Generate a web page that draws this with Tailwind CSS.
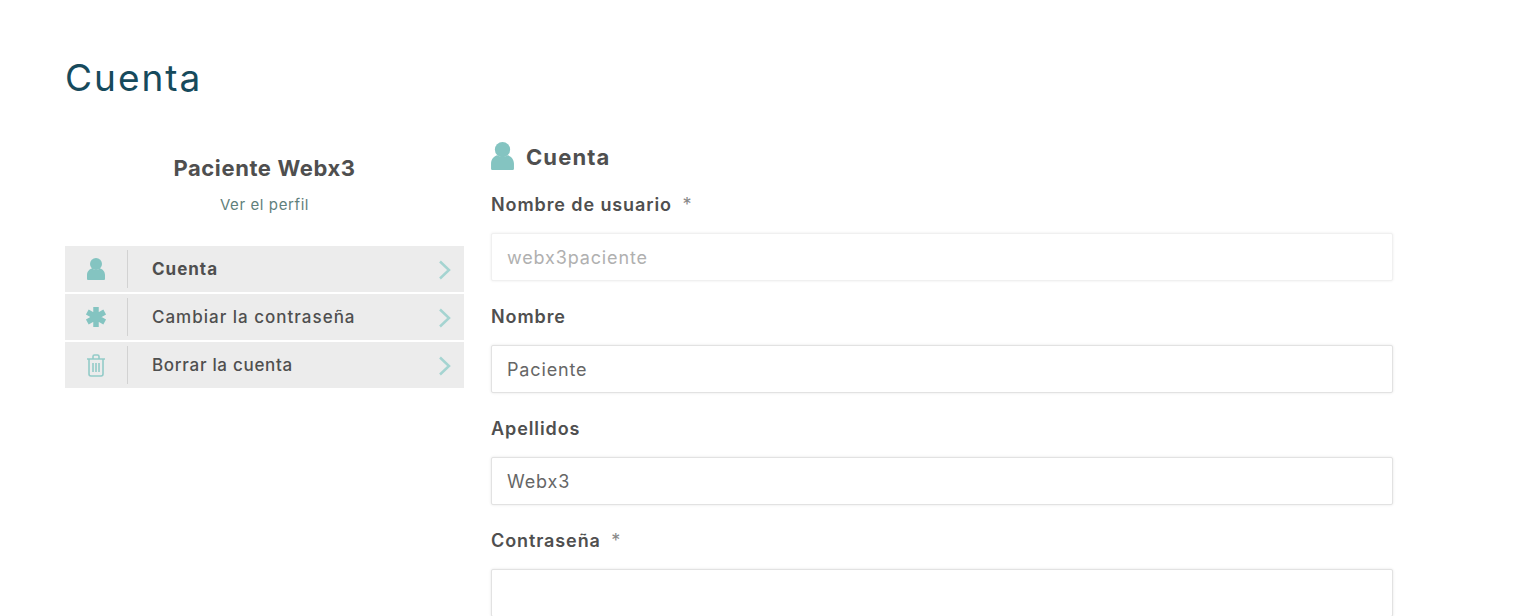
<!DOCTYPE html>
<html lang="en">
<head>
  <meta charset="UTF-8" />
  <title>Cuenta</title>
  <script src="https://cdn.jsdelivr.net/npm/@tailwindcss/browser@4"></script>
</head>
<body class="bg-white font-['Inter',sans-serif] text-[#4f4f4f] h-[616px] overflow-hidden">
  <div class="pl-[65px] pt-[56px]">
    <h1 class="text-[37px] leading-[44px] text-[#164a5c] tracking-[2px]">Cuenta</h1>

    <div class="flex gap-[27px] mt-[36px]">
      <!-- Sidebar -->
      <aside class="w-[399px] shrink-0">
        <div class="pt-[16px] text-center">
          <p class="text-[22px] leading-[32px] font-bold tracking-[0.6px]">Paciente Webx3</p>
          <a class="block mt-[10px] text-[15px] leading-[22px] text-[#5f7f7c] tracking-[0.6px]">Ver el perfil</a>
        </div>
        <ul class="mt-[30px] flex flex-col gap-[2px]">
          <li class="h-[46px] bg-[#ececec] flex items-center">
            <span class="w-[62px] flex justify-center">
              <svg class="w-[18px] h-[22px]" viewBox="0 0 18 22" fill="#84c4c1"><circle cx="9" cy="6" r="6"/><path d="M1 22a1 1 0 0 1-1-1v-4c0-3.500 2.500-6 5-6.500 1.200.8 2.600 1.200 4 1.200s2.800-.4 4-1.200c2.500.5 5 3 5 6.500v4a1 1 0 0 1-1 1z"/></svg>
            </span>
            <span class="w-px h-[38px] bg-[#d2d2d2]"></span>
            <span class="ml-[24px] pt-[2px] flex-1 text-[17px] font-bold tracking-[1px]">Cuenta</span>
            <svg class="w-[14px] h-[20px] mr-[12px] mt-[2px]" viewBox="0 0 14 20" fill="none" stroke="#a5d4d1" stroke-width="2.500"><path d="M2 1.500 11 10 2 18.500"/></svg>
          </li>
          <li class="h-[46px] bg-[#ececec] flex items-center">
            <span class="w-[62px] flex justify-center">
              <svg class="w-[22px] h-[22px]" viewBox="0 0 22 22" fill="none" stroke="#84c4c1" stroke-width="5.500"><path d="M11 1v20M2.300 6l17.400 10M19.700 6 2.300 16"/></svg>
            </span>
            <span class="w-px h-[38px] bg-[#d2d2d2]"></span>
            <span class="ml-[24px] pt-[2px] flex-1 text-[17px] font-medium tracking-[1px]">Cambiar la contraseña</span>
            <svg class="w-[14px] h-[20px] mr-[12px] mt-[2px]" viewBox="0 0 14 20" fill="none" stroke="#a5d4d1" stroke-width="2.500"><path d="M2 1.500 11 10 2 18.500"/></svg>
          </li>
          <li class="h-[46px] bg-[#ececec] flex items-center">
            <span class="w-[62px] flex justify-center">
              <svg class="w-[20px] h-[23px]" viewBox="0 0 20 23" fill="none" stroke="#93cbc8" stroke-width="1.600"><path d="M1 5h18M7 5V2.500C7 1.500 7.500 1 8.500 1h3c1 0 1.500.5 1.500 1.500V5M3 5v15c0 1.200.8 2 2 2h10c1.200 0 2-.8 2-2V5M7 9v9M10 9v9M13 9v9"/></svg>
            </span>
            <span class="w-px h-[38px] bg-[#d2d2d2]"></span>
            <span class="ml-[24px] pt-[2px] flex-1 text-[17px] font-medium tracking-[0.7px]">Borrar la cuenta</span>
            <svg class="w-[14px] h-[20px] mr-[12px] mt-[2px]" viewBox="0 0 14 20" fill="none" stroke="#a5d4d1" stroke-width="2.500"><path d="M2 1.500 11 10 2 18.500"/></svg>
          </li>
        </ul>
      </aside>

      <!-- Form -->
      <main class="w-[902px] pt-[6px]">
        <div class="flex items-center gap-[12px] h-[30px]">
          <svg class="w-[23px] h-[28px] mb-[2px]" viewBox="0 0 18 22" fill="#84c4c1"><circle cx="9" cy="6" r="6"/><path d="M1 22a1 1 0 0 1-1-1v-4c0-3.500 2.500-6 5-6.500 1.200.8 2.600 1.200 4 1.200s2.800-.4 4-1.200c2.500.5 5 3 5 6.500v4a1 1 0 0 1-1 1z"/></svg>
          <h2 class="text-[22px] leading-[30px] font-bold tracking-[1.1px]">Cuenta</h2>
        </div>

        <div class="mt-[21px] flex flex-col gap-[24px]">
          <div>
            <label class="block text-[18px] leading-[24px] font-semibold tracking-[0.9px]">Nombre de usuario <span class="ml-[5px] font-normal text-[#888]">*</span></label>
            <input disabled value="webx3paciente" class="mt-[16px] block w-full h-[48px] px-[15px] text-[18px] tracking-[0.85px] text-[#b0b0b0] bg-white border border-[#f0f0f0] rounded-[2px] shadow-[0_0_3px_rgba(0,0,0,0.08)]" />
          </div>
          <div>
            <label class="block text-[18px] leading-[24px] font-semibold tracking-[0.9px]">Nombre</label>
            <input value="Paciente" class="mt-[16px] block w-full h-[48px] px-[15px] text-[18px] tracking-[0.85px] text-[#666] bg-white border border-[#e2e2e2] rounded-[2px] shadow-[0_0_3px_rgba(0,0,0,0.1)]" />
          </div>
          <div>
            <label class="block text-[18px] leading-[24px] font-semibold tracking-[0.9px]">Apellidos</label>
            <input value="Webx3" class="mt-[16px] block w-full h-[48px] px-[15px] text-[18px] tracking-[0.85px] text-[#666] bg-white border border-[#e2e2e2] rounded-[2px] shadow-[0_0_3px_rgba(0,0,0,0.1)]" />
          </div>
          <div>
            <label class="block text-[18px] leading-[24px] font-semibold tracking-[0.9px]">Contraseña <span class="ml-[5px] font-normal text-[#888]">*</span></label>
            <input type="password" class="mt-[16px] block w-full h-[48px] px-[15px] text-[18px] bg-white border border-[#e2e2e2] rounded-[2px] shadow-[0_0_3px_rgba(0,0,0,0.1)]" />
          </div>
        </div>
      </main>
    </div>
  </div>
</body>
</html>
